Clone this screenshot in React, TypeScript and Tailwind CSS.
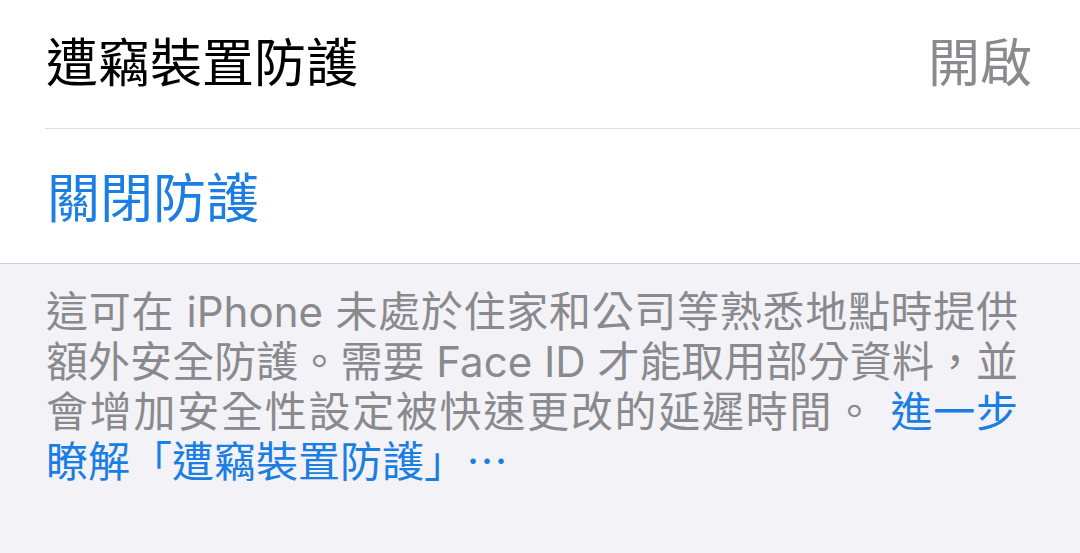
import React from 'react';

const font = { fontFamily: 'Inter, "Noto Sans CJK TC", "Noto Sans CJK SC", sans-serif' };

const StolenDeviceProtection = () => {
  return (
    <div className="w-[1080px] h-[553px] bg-[#f2f2f7] overflow-hidden" style={font}>
      <section className="bg-white border-b border-[#cfcfd4]">
        <div className="h-[128px] flex items-center justify-between pl-[46px] pr-[48px]">
          <span className="text-[52px] leading-none text-black">遭竊裝置防護</span>
          <span className="text-[52px] leading-none text-[#8a8a8e]">開啟</span>
        </div>
        <div className="ml-[45px] h-px bg-[#dedee2]" />
        <div className="h-[134px] flex items-center pl-[47px] pt-[6px]">
          <button className="text-[53px] leading-none text-[#1a7ee3]">關閉防護</button>
        </div>
      </section>

      <div className="pl-[46px] pr-[62px] pt-[23px] text-[42px] leading-[50px] text-[#8a8a8e] whitespace-nowrap">
        <p className="text-justify [text-align-last:justify]">
          這可在 iPhone 未處於住家和公司等熟悉地點時提供
        </p>
        <p className="text-justify [text-align-last:justify]">
          額外安全防護。需要 Face ID 才能取用部分資料，並
        </p>
        <p className="text-justify [text-align-last:justify] tracking-[1px]">
          會增加安全性設定被快速更改的延遲時間。 <span className="text-[#1a7ee3] tracking-normal">進一步</span>
        </p>
        <p className="text-[#1a7ee3]">瞭解「遭竊裝置防護」⋯</p>
      </div>
    </div>
  );
};

export default function App() {
  return <StolenDeviceProtection />;
}
